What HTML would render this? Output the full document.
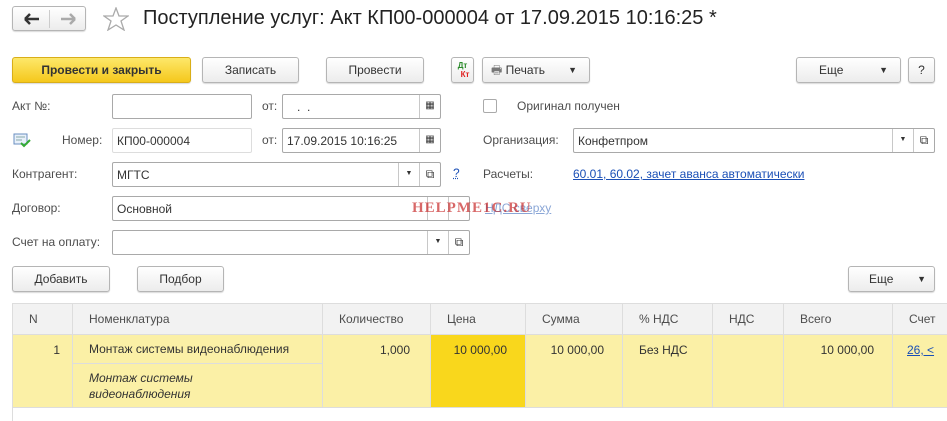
<!DOCTYPE html><html><head><meta charset="utf-8"><style>
*{box-sizing:border-box}body{margin:0;width:947px;height:421px;background:#fff;font-family:"Liberation Sans",Arial,sans-serif;font-size:12px;color:#404040;position:relative;overflow:hidden}
.a{position:absolute}
.btn{position:absolute;border:1px solid #b5b5b5;border-radius:3px;background:linear-gradient(#fff,#ececec);text-align:center;color:#333;box-shadow:0 1px 1px rgba(0,0,0,.15)}
.in{position:absolute;border:1px solid #a9a9a9;border-radius:2px;background:#fff;height:25px;padding:5px 4px;color:#333;font-size:12px}
.sb{position:absolute;top:0;bottom:0;width:21px;border-left:1px solid #c8c8c8}
.lbl{position:absolute;color:#4d4d4d}
.lnk{position:absolute;color:#1a4fb6;text-decoration:underline}
table{border-collapse:collapse;position:absolute;left:12px;top:303px;width:940px;table-layout:fixed}
td{border:1px solid #ddd;padding:0 16px;font-size:12px;color:#333}
th{border:1px solid #ddd;background:#f2f2f2;font-weight:normal;text-align:left;padding:0 16px;height:31px;color:#4d4d4d}
.y{background:#fbf0a6}
</style></head><body>
<div class="btn" style="left:12px;top:6px;width:74px;height:25px;">
<svg class="a" style="left:10px;top:5px" width="18" height="14"><path d="M2 7H16M2 7L7 2M2 7L7 12" stroke="#333" stroke-width="2.5" fill="none"/></svg>
<div class="a" style="left:36px;top:3px;width:1px;height:18px;background:#ccc"></div>
<svg class="a" style="left:46px;top:5px" width="18" height="14"><path d="M2 7H16M16 7L11 2M16 7L11 12" stroke="#aaa" stroke-width="2.5" fill="none"/></svg></div>
<svg class="a" style="left:103px;top:7px" width="26" height="24"><polygon points="13,1 16,9 25,9 18,14 21,23 13,18 5,23 8,14 1,9 10,9" fill="none" stroke="#aaa" stroke-width="1.3"/></svg>
<div class="a" style="left:143px;top:7px;font-size:20px;color:#222">Поступление услуг: Акт КП00-000004 от 17.09.2015 10:16:25 *</div>
<div class="btn" style="left:12px;top:57px;width:179px;height:26px;background:linear-gradient(#fde86a,#f5c81c);border-color:#d9ae18;font-weight:bold;line-height:24px">Провести и закрыть</div>
<div class="btn" style="left:202px;top:57px;width:97px;height:26px;line-height:24px">Записать</div>
<div class="btn" style="left:326px;top:57px;width:98px;height:26px;line-height:24px">Провести</div>
<div class="btn" style="left:451px;top:57px;width:23px;height:26px;font-size:8px;font-weight:bold;line-height:9px;padding-top:3px"><span style="color:#2a8a2a">Дт</span><br><span style="color:#e02020;margin-left:5px">Кт</span></div>
<div class="btn" style="left:482px;top:57px;width:108px;height:26px;line-height:24px;text-align:left;padding-left:8px"><span style="color:#777">🖶</span> Печать <span style="position:absolute;right:12px;font-size:9px">▼</span></div>
<div class="btn" style="left:796px;top:57px;width:105px;height:26px;line-height:24px;text-align:left;padding-left:22px">Еще<span style="position:absolute;right:12px;font-size:9px">▼</span></div>
<div class="btn" style="left:908px;top:57px;width:27px;height:26px;line-height:24px">?</div>

<div class="lbl" style="left:12px;top:99px">Акт №:</div>
<div class="in" style="left:112px;top:94px;width:140px"></div>
<div class="lbl" style="left:262px;top:99px">от:</div>
<div class="in" style="left:282px;top:94px;width:159px">&nbsp;&nbsp;&nbsp;.&nbsp;&nbsp;.<div class="sb" style="right:0;text-align:center;padding-top:5px;font-size:10px">▦</div></div>
<div class="a" style="left:483px;top:99px;width:14px;height:14px;border:1px solid #aaa;border-radius:2px"></div>
<div class="lbl" style="left:517px;top:99px">Оригинал получен</div>

<svg class="a" style="left:13px;top:133px" width="18" height="15"><rect x="1" y="1" width="13" height="10" fill="#e8f0fa" stroke="#6a8fc0"/><line x1="3" y1="4" x2="12" y2="4" stroke="#8aa"/><line x1="3" y1="7" x2="9" y2="7" stroke="#8aa"/><path d="M8 10l3 3 6-6" stroke="#3a3" stroke-width="2" fill="none"/></svg>
<div class="lbl" style="left:62px;top:133px">Номер:</div>
<div class="in" style="left:112px;top:128px;width:140px;border-color:#ddd">КП00-000004</div>
<div class="lbl" style="left:262px;top:133px">от:</div>
<div class="in" style="left:282px;top:128px;width:159px">17.09.2015 10:16:25<div class="sb" style="right:0;text-align:center;padding-top:5px;font-size:10px">▦</div></div>
<div class="lbl" style="left:483px;top:133px">Организация:</div>
<div class="in" style="left:573px;top:128px;width:362px">Конфетпром<div class="sb" style="right:21px;text-align:center;padding-top:7px;font-size:7px">▼</div><div class="sb" style="right:0;text-align:center;padding-top:4px">⧉</div></div>

<div class="lbl" style="left:12px;top:167px">Контрагент:</div>
<div class="in" style="left:112px;top:162px;width:329px">МГТС<div class="sb" style="right:21px;text-align:center;padding-top:7px;font-size:7px">▼</div><div class="sb" style="right:0;text-align:center;padding-top:4px">⧉</div></div>
<div class="lnk" style="left:453px;top:166px;text-decoration:underline dotted">?</div>
<div class="lbl" style="left:483px;top:167px">Расчеты:</div>
<div class="lnk" style="left:573px;top:167px">60.01, 60.02, зачет аванса автоматически</div>

<div class="lbl" style="left:12px;top:201px">Договор:</div>
<div class="in" style="left:112px;top:196px;width:358px">Основной<div class="sb" style="right:21px"></div><div class="sb" style="right:0"></div></div>
<div class="lnk" style="left:485px;top:201px;color:#8aa6d6">НДС сверху</div>
<div class="a" style="left:412px;top:200px;font-family:'Liberation Serif',serif;font-size:15px;font-weight:bold;color:rgba(200,40,40,.7);letter-spacing:1px">HELPME1C.RU</div>

<div class="lbl" style="left:12px;top:235px">Счет на оплату:</div>
<div class="in" style="left:112px;top:230px;width:358px"><div class="sb" style="right:21px;text-align:center;padding-top:7px;font-size:7px">▼</div><div class="sb" style="right:0;text-align:center;padding-top:4px">⧉</div></div>

<div class="btn" style="left:12px;top:266px;width:98px;height:26px;line-height:24px">Добавить</div>
<div class="btn" style="left:137px;top:266px;width:87px;height:26px;line-height:24px">Подбор</div>
<div class="btn" style="left:848px;top:266px;width:87px;height:26px;line-height:24px;text-align:left;padding-left:20px">Еще<span style="position:absolute;right:8px;font-size:9px">▼</span></div>

<table>
<colgroup><col style="width:60px"><col style="width:250px"><col style="width:108px"><col style="width:95px"><col style="width:97px"><col style="width:90px"><col style="width:71px"><col style="width:109px"><col style="width:60px"></colgroup>
<tr><th>N</th><th>Номенклатура</th><th>Количество</th><th>Цена</th><th>Сумма</th><th>% НДС</th><th>НДС</th><th>Всего</th><th>Счет</th></tr>
<tr class="y" style="height:29px"><td rowspan="2" style="text-align:right;vertical-align:top;padding:8px 12px 0 0">1</td><td>Монтаж системы видеонаблюдения</td><td rowspan="2" style="text-align:right;vertical-align:top;padding:8px 20px 0 0">1,000</td><td rowspan="2" style="background:#f9d71c;text-align:right;vertical-align:top;padding:8px 18px 0 0">10 000,00</td><td rowspan="2" style="text-align:right;vertical-align:top;padding:8px 18px 0 0">10 000,00</td><td rowspan="2" style="vertical-align:top;padding-top:8px">Без НДС</td><td rowspan="2"></td><td rowspan="2" style="text-align:right;vertical-align:top;padding:8px 18px 0 0">10 000,00</td><td rowspan="2" style="vertical-align:top;padding:8px 0 0 14px;white-space:nowrap"><span style="color:#1a4fb6;text-decoration:underline">26, &lt;</span></td></tr>
<tr class="y" style="height:44px"><td style="font-style:italic;line-height:16px">Монтаж системы<br>видеонаблюдения</td></tr>
</table>
<div class="a" style="left:12px;top:407px;width:1px;height:14px;background:#ddd"></div>
</body></html>
